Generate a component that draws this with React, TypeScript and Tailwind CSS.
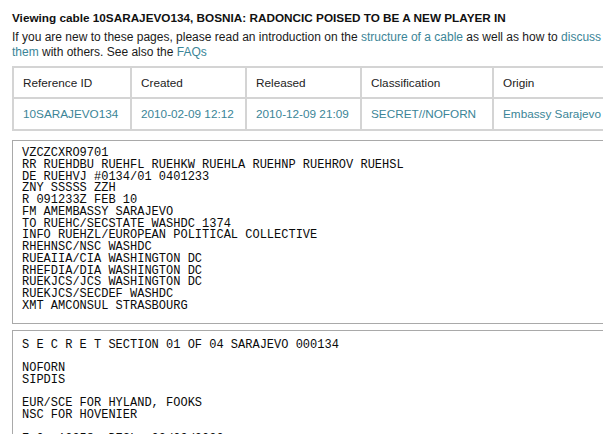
const HEAD = ["Reference ID", "Created", "Released", "Classification", "Origin"];
const ROW = ["10SARAJEVO134", "2010-02-09 12:12", "2010-12-09 21:09", "SECRET//NOFORN", "Embassy Sarajevo"];
const COLS = ["w-[118px]", "w-[115px]", "w-[115px]", "w-[132px]", "w-[118px]"];

const HEADER_LINES = [
  "VZCZCXRO9701",
  "RR RUEHDBU RUEHFL RUEHKW RUEHLA RUEHNP RUEHROV RUEHSL",
  "DE RUEHVJ #0134/01 0401233",
  "ZNY SSSSS ZZH",
  "R 091233Z FEB 10",
  "FM AMEMBASSY SARAJEVO",
  "TO RUEHC/SECSTATE WASHDC 1374",
  "INFO RUEHZL/EUROPEAN POLITICAL COLLECTIVE",
  "RHEHNSC/NSC WASHDC",
  "RUEAIIA/CIA WASHINGTON DC",
  "RHEFDIA/DIA WASHINGTON DC",
  "RUEKJCS/JCS WASHINGTON DC",
  "RUEKJCS/SECDEF WASHDC",
  "XMT AMCONSUL STRASBOURG",
];

const BODY_LINES = [
  "S E C R E T SECTION 01 OF 04 SARAJEVO 000134",
  "",
  "NOFORN",
  "SIPDIS",
  "",
  "EUR/SCE FOR HYLAND, FOOKS",
  "NSC FOR HOVENIER",
  "",
  "E.O. 12958: DECL: 02/09/2020",
  "TAGS: PGOV, PREL, BK",
];

function CableBox({ lines, top }: { lines: string[]; top: string }) {
  return (
    <pre
      className={`border border-[#a9a9a9] border-r-0 pl-[9px] ${top} pb-[10px] text-[12px] leading-[11.75px] text-[#0a0a0a] whitespace-pre`}
      style={{ fontFamily: '"Liberation Mono", "Courier New", monospace' }}
    >
      {lines.join("\n")}
    </pre>
  );
}

export default function App() {
  return (
    <div className="w-[603px] h-[434px] overflow-hidden bg-white">
      <div
        className="w-[660px] pl-3 pt-[10px] text-[#1a1a1a]"
        style={{ fontFamily: '"Liberation Sans", Arial, sans-serif' }}
      >
        <h2 className="text-[11.75px] leading-[15px] font-bold text-[#111]">
          Viewing cable 10SARAJEVO134, BOSNIA: RADONCIC POISED TO BE A NEW PLAYER IN
        </h2>
        <p className="mt-[5px] text-[12px] leading-[15px] w-[612px]">
          If you are new to these pages, please read an introduction on the{" "}
          <a className="text-[#3b8597]">structure of a cable</a> as well as how to{" "}
          <a className="text-[#3b8597]">discuss them</a> with others. See also the{" "}
          <a className="text-[#3b8597]">FAQs</a>
        </p>

        <table className="mt-[6px] border-collapse text-[11.75px] table-fixed">
          <thead>
            <tr>
              {HEAD.map((h, i) => (
                <th
                  key={h}
                  className={`${COLS[i]} h-[31px] border-2 border-[#d4d4d4] px-[9px] text-left font-normal text-[#222]`}
                >
                  {h}
                </th>
              ))}
            </tr>
          </thead>
          <tbody>
            <tr>
              {ROW.map((c) => (
                <td
                  key={c}
                  className="h-[32px] border-2 border-[#d4d4d4] px-[9px] text-[#3b8597] whitespace-nowrap"
                >
                  {c}
                </td>
              ))}
            </tr>
          </tbody>
        </table>

        <div className="mt-[9px]">
          <CableBox lines={HEADER_LINES} top="pt-[7px]" />
        </div>
        <div className="mt-[6px]">
          <CableBox lines={BODY_LINES} top="pt-[9px]" />
        </div>
      </div>
    </div>
  );
}
